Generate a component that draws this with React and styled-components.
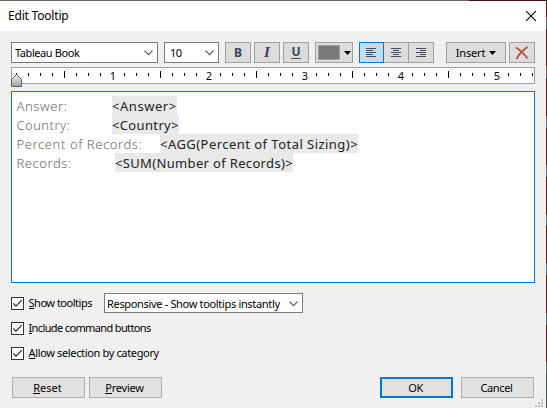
import React from 'react';
import styled, { createGlobalStyle, css } from 'styled-components';

const GlobalStyle = createGlobalStyle`
  * { box-sizing: border-box; }
  body { margin: 0; overflow: hidden; }
`;

const Backdrop = styled.div`
  width: 547px;
  height: 408px;
  padding: 1px 1px 0 0;
  background:
    linear-gradient(90deg, #686868 469px, #4a1014 469px) 0 0 / 547px 1px no-repeat,
    linear-gradient(#4b5050, #4b5050) 546px 374px / 1px 34px no-repeat,
    repeating-linear-gradient(#6b1014 0 17px, #62696b 17px 29px, #6b1014 29px 49.3px);
`;

const Dialog = styled.div`
  height: 407px;
  display: flex;
  flex-direction: column;
  background: #f0f0f0;
  color: #000;
  font: 11px/14px "Noto Sans", sans-serif;
`;

const TitleBar = styled.header`
  height: 30px;
  flex: none;
  display: flex;
  align-items: center;
  justify-content: space-between;
  padding: 0 10px 0 8px;
  background: #fff;
  font-size: 12px;
  svg { display: block; }
`;

const Text = styled.span`
  letter-spacing: ${(p) => p.$track || 0}px;
  white-space: pre;
`;

const Mnemonic = styled.span`
  box-shadow: 0 1px 0 #000;
  display: inline-block;
  height: 12px;
  line-height: 14px;
`;

const Content = styled.main`
  flex: 1;
  display: flex;
  flex-direction: column;
  padding: 11px 11px 10px;
`;

const Toolbar = styled.div`
  display: flex;
  height: 21px;
  flex: none;
`;

const Select = styled.div`
  width: ${(p) => p.$width}px;
  height: ${(p) => p.$height || 21}px;
  margin-right: ${(p) => p.$gap || 0}px;
  display: flex;
  align-items: center;
  justify-content: space-between;
  padding: 1px 4px 0 ${(p) => p.$inset || 3}px;
  background: #fff;
  border: 1px solid #7a7a7a;
`;

const ToolButton = styled.button`
  width: ${(p) => p.$width || 26}px;
  height: 21px;
  margin: 0 ${(p) => p.$gap || 0}px 0 0;
  display: flex;
  align-items: center;
  justify-content: center;
  gap: 4px;
  padding: 0;
  border: 1px solid #a0a0a0;
  background: #dcdcdc;
  font: inherit;
  color: #000;
`;

const AlignGroup = styled.div`
  display: flex;
  margin-right: 12px;
`;

const AlignButton = styled(ToolButton)`
  ${(p) => p.$active
    ? css`border-color: #0078d7; background: #bfddf5;`
    : css`border-left: 0;`}
`;

const Swatch = styled.span`
  width: 22px;
  height: 15px;
  background: #787878;
  border: 1px solid #a0a0a0;
`;

const Glyph = styled.span`
  color: #3b4557;
  font: ${(p) => p.$style || 'normal'} bold 12px/14px ${(p) => p.$serif ? '"DejaVu Serif", serif' : '"Noto Sans", sans-serif'};
  border-bottom: ${(p) => (p.$underline ? '1px solid #3b4557' : '0')};
  height: ${(p) => (p.$underline ? 13 : 14)}px;
  line-height: ${(p) => (p.$underline ? 12 : 14)}px;
`;

const Ruler = styled.div`
  height: 17px;
  flex: none;
  margin-top: 4px;
  background: #fff;
  border: 1px solid #a0a0a0;
  svg { display: block; margin: -1px; overflow: visible; }
`;

const Editor = styled.div`
  height: 192px;
  flex: none;
  margin-top: 7px;
  padding: 4px;
  border: 1px solid #0078d7;
  background: #fff;
  font-size: 13px;
  line-height: 21px;
`;

const Line = styled.div`
  display: flex;
  height: 19px;
`;

const Label = styled.span`
  width: ${(p) => p.$width}px;
  flex: none;
  padding-left: 0.5px;
  color: #696969;
  font-weight: 300;
  letter-spacing: ${(p) => p.$track}px;
  white-space: nowrap;
`;

const Token = styled.span`
  width: ${(p) => p.$width}px;
  background: #e9e9e9;
  color: #222;
  font-weight: 400;
  letter-spacing: ${(p) => p.$track}px;
  white-space: nowrap;
`;

const Options = styled.div`
  display: flex;
  flex-direction: column;
  margin-top: 10px;
`;

const Option = styled.div`
  display: flex;
  align-items: center;
  height: ${(p) => p.$height}px;
`;

const CheckLabel = styled.div`
  display: flex;
  align-items: center;
  gap: 4.5px;
  svg { display: block; }
`;

const Footer = styled.footer`
  display: flex;
  margin-top: auto;
  padding: 0 0 0 1px;
`;

const PushButton = styled.button`
  width: 73px;
  height: 21px;
  margin: 0 ${(p) => p.$gap || 0}px 0 0;
  padding: 0 2px 0 0;
  border: ${(p) => (p.$primary ? '2px solid #0078d7' : '1px solid #adadad')};
  background: #e1e1e1;
  color: #000;
  font: inherit;
`;

const Grip = styled.svg`
  position: absolute;
  left: 535px;
  top: 399px;
`;

const Chevron = () => (
  <svg width="9" height="6" viewBox="0 0 9 6" fill="none" stroke="#505050" strokeWidth="1.1">
    <path d="M.5 .7 4.5 4.7 8.5 .7" />
  </svg>
);

const Caret = () => (
  <svg width="7" height="4" viewBox="0 0 7 4"><path d="M0 0H7L3.5 4Z" /></svg>
);

const ALIGN_X = {
  left: [[0, 10], [0, 7], [0, 10], [0, 7], [0, 10]],
  center: [[0, 10], [2, 6], [0, 10], [2, 6], [0, 10]],
  right: [[0, 10], [4, 6], [0, 10], [4, 6], [0, 10]],
};

const AlignIcon = ({ kind }) => (
  <svg width="11" height="9" viewBox="0 0 11 9" fill="#3f4d63">
    {ALIGN_X[kind].map(([x, w], i) => <rect key={i} x={x} y={i * 2} width={w} height="1" />)}
  </svg>
);

const CheckBox = () => (
  <svg width="13" height="13" viewBox="0 0 13 13">
    <rect x=".5" y=".5" width="12" height="12" fill="#fff" stroke="#333" />
    <path d="M2.3 6.4 5 9.1 10.8 3.2" fill="none" stroke="#222" strokeWidth="1.2" />
  </svg>
);

const ticks = Array.from({ length: 44 }, (_, i) => i);

const RulerScale = () => (
  <svg width="524" height="17" viewBox="0 0 524 17" fontFamily="Noto Sans, sans-serif" fontSize="11">
    {ticks.map((i) => {
      const x = 5 + i * 12;
      if (i > 0 && i % 8 === 0) {
        return <text key={i} x={x + 1} y="13" textAnchor="middle">{i / 8}</text>;
      }
      const long = i % 8 === 4;
      return <rect key={i} x={x} y={long ? 4 : 6} width="1" height={long ? 7 : 3} />;
    })}
    <defs>
      <linearGradient id="marker" x2="0" y2="1">
        <stop offset="0" stopColor="#f2f2f2" />
        <stop offset="1" stopColor="#a0a0a0" />
      </linearGradient>
    </defs>
    <path d="M5.5 7.5 10.5 12.5V19.5H.5V12.5Z" fill="url(#marker)" stroke="#606060" />
  </svg>
);

const lines = [
  { label: 'Answer:', track: 0.6, width: 96, token: '<Answer>', tTrack: 0.55, tWidth: 65 },
  { label: 'Country:', track: 0.45, width: 96, token: '<Country>', tTrack: 0.35, tWidth: 67 },
  { label: 'Percent of Records:', track: 0.6, width: 144, token: '<AGG(Percent of Total Sizing)>', tTrack: 0.46, tWidth: 198 },
  { label: 'Records:', track: 0.55, width: 99, token: '<SUM(Number of Records)>', tTrack: 0.34, tWidth: 178 },
];

const Check = ({ first, rest, track }) => (
  <CheckLabel>
    <CheckBox />
    <Text $track={track}><Mnemonic>{first}</Mnemonic>{rest}</Text>
  </CheckLabel>
);

const ShowCell = styled.div`
  width: 93px;
  flex: none;
`;

export default function App() {
  return (
    <Backdrop>
      <GlobalStyle />
      <Dialog>
        <TitleBar>
          <Text $track={-0.2}>Edit Tooltip</Text>
          <svg width="10" height="10" viewBox="0 0 10 10" stroke="#000" strokeWidth="1.1">
            <path d="M0 0 10 10M10 0 0 10" />
          </svg>
        </TitleBar>
        <Content>
          <Toolbar>
            <Select $width={147} $gap={6}><Text $track={-0.42}>Tableau Book</Text><Chevron /></Select>
            <Select $width={55} $gap={6} $inset={5}><Text $track={-0.6}>10</Text><Chevron /></Select>
            <ToolButton $gap={3}><Glyph>B</Glyph></ToolButton>
            <ToolButton $gap={3}><Glyph $serif $style="italic">I</Glyph></ToolButton>
            <ToolButton $gap={6}><Glyph $underline>U</Glyph></ToolButton>
            <ToolButton $width={38} $gap={6}><Swatch /><Caret /></ToolButton>
            <AlignGroup>
              <AlignButton $width={25} $active><AlignIcon kind="left" /></AlignButton>
              <AlignButton $width={25}><AlignIcon kind="center" /></AlignButton>
              <AlignButton $width={25}><AlignIcon kind="right" /></AlignButton>
            </AlignGroup>
            <ToolButton $width={60} $gap={3}><Text $track={-0.15}>Insert</Text><Caret /></ToolButton>
            <ToolButton>
              <svg width="14" height="14" viewBox="0 0 14 14" fill="none" stroke="#b8533a" strokeWidth="1.9">
                <path d="M1 1.5C5 4 9 8 12.5 12.5M12.5 1C8 4 4 8 1.5 13" />
              </svg>
            </ToolButton>
          </Toolbar>
          <Ruler><RulerScale /></Ruler>
          <Editor>
            {lines.map((l) => (
              <Line key={l.label}>
                <Label $width={l.width} $track={l.track}>{l.label}</Label>
                <Token $width={l.tWidth} $track={l.tTrack}>{l.token}</Token>
              </Line>
            ))}
          </Editor>
          <Options>
            <Option $height={20}>
              <ShowCell><Check first="S" rest="how tooltips" track={-0.48} /></ShowCell>
              <Select $width={199} $height={20} $inset={2}>
                <Text $track={-0.33}>Responsive - Show tooltips instantly</Text><Chevron />
              </Select>
            </Option>
            <Option $height={30}><Check first="I" rest="nclude command buttons" track={-0.63} /></Option>
            <Option $height={20}><Check first="A" rest="llow selection by category" track={-0.35} /></Option>
          </Options>
          <Footer>
            <PushButton $gap={4}><Text><Mnemonic>R</Mnemonic>eset</Text></PushButton>
            <PushButton $gap={218}><Text $track={-0.25}><Mnemonic>P</Mnemonic>review</Text></PushButton>
            <PushButton $gap={8} $primary><Text $track={-0.4}>OK</Text></PushButton>
            <PushButton><Text $track={-0.35}>Cancel</Text></PushButton>
          </Footer>
        </Content>
      </Dialog>
      <Grip width="8" height="8" fill="#bfbfbf">
        <path d="M6 0h2v2h-2zM3 3h2v2h-2zM6 3h2v2h-2zM0 6h2v2h-2zM3 6h2v2h-2zM6 6h2v2h-2z" />
      </Grip>
    </Backdrop>
  );
}
